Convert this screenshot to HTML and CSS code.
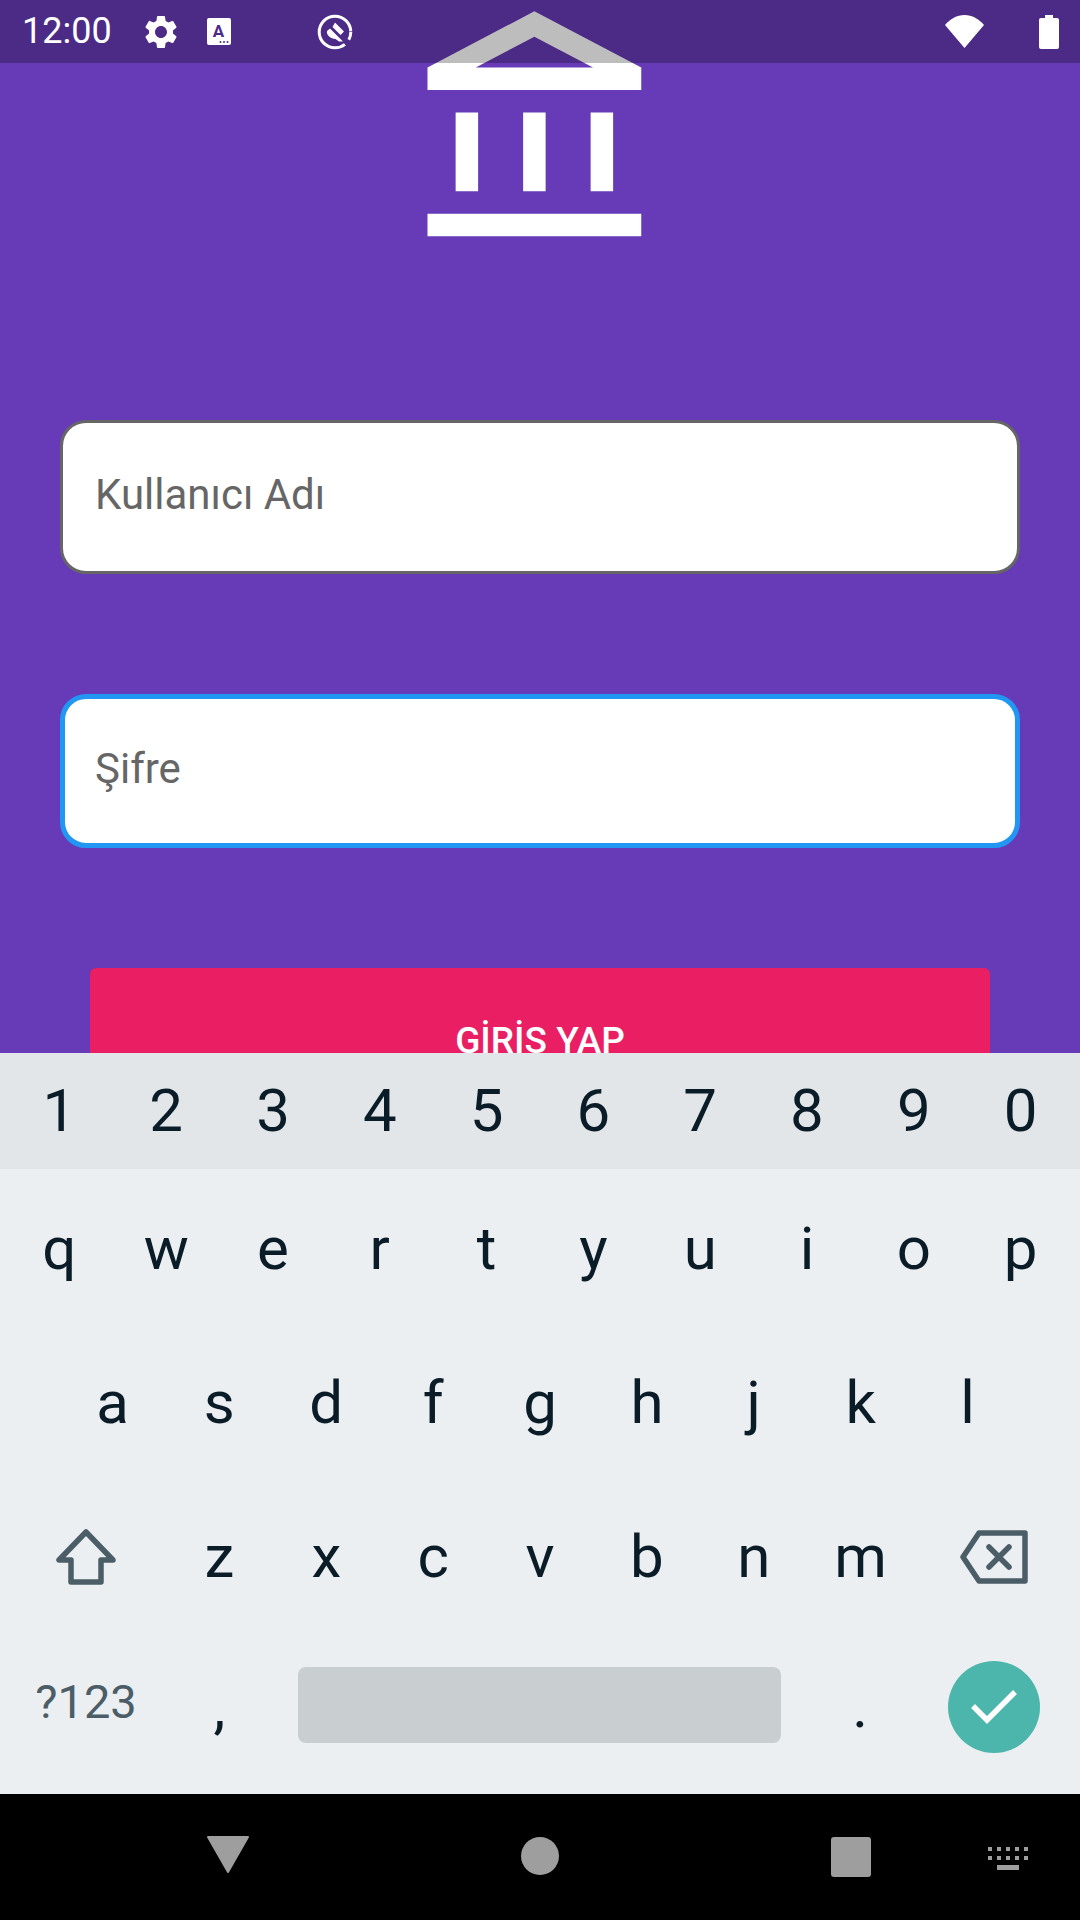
FILE: index.html
```html
<!DOCTYPE html>
<html lang="tr">
<head>
<meta charset="utf-8">
<title>Giriş</title>
<link rel="stylesheet" href="styles.css">
</head>
<body>
<div class="phone">
  <header class="status">
    <span class="time">12:00</span>
    <svg class="ic-gear" viewBox="0 0 24 24"><path fill="#fff" d="M19.14 12.94c.04-.3.06-.61.06-.94 0-.32-.02-.64-.07-.94l2.03-1.58a.49.49 0 0 0 .12-.61l-1.92-3.32a.488.488 0 0 0-.59-.22l-2.39.96c-.5-.38-1.03-.7-1.62-.94l-.36-2.54a.484.484 0 0 0-.48-.41h-3.84c-.24 0-.43.17-.47.41l-.36 2.54c-.59.24-1.13.57-1.62.94l-2.39-.96c-.22-.08-.47 0-.59.22L2.74 8.87c-.12.21-.08.47.12.61l2.03 1.58c-.05.3-.09.63-.09.94s.02.64.07.94l-2.03 1.58a.49.49 0 0 0-.12.61l1.92 3.32c.12.22.37.29.59.22l2.39-.96c.5.38 1.03.7 1.62.94l.36 2.54c.05.24.24.41.48.41h3.84c.24 0 .44-.17.47-.41l.36-2.54c.59-.24 1.13-.56 1.62-.94l2.39.96c.22.08.47 0 .59-.22l1.92-3.32c.12-.22.07-.47-.12-.61l-2.01-1.58zM12 15.6c-1.98 0-3.6-1.62-3.6-3.6s1.62-3.6 3.6-3.6 3.6 1.62 3.6 3.6-1.62 3.6-3.6 3.6z"/></svg>
    <svg class="ic-a" viewBox="0 0 24 27"><rect width="24" height="27" rx="2" fill="#fff"/><text x="11.5" y="19" text-anchor="middle" class="ic-a-letter">A</text><circle cx="13.5" cy="24" r="1" fill="#4c2b87"/><circle cx="17" cy="24" r="1" fill="#4c2b87"/><circle cx="20.5" cy="24" r="1" fill="#4c2b87"/></svg>
    <svg class="ic-q" viewBox="0 0 36 36"><circle cx="18" cy="18" r="15.8" fill="none" stroke="#fff" stroke-width="3" stroke-dasharray="84 6" stroke-dashoffset="-14"/><path fill="#fff" d="M18 8.5 27 17.5 23.5 21 15.5 13ZM13 14.5 20.5 22 26 27.5 22 27.5 18.5 25C14 25 9 21 10 17Z"/></svg>
    <span class="status-spacer"></span>
    <svg class="ic-wifi" viewBox="0 0 39 33"><path fill="#fff" d="M19.5 33 0 10C5 4 12 0 19.5 0S34 4 39 10Z"/></svg>
    <svg class="ic-batt" viewBox="0 0 20 34"><path fill="#fff" d="M6 0h8v3h4a2 2 0 0 1 2 2v27a2 2 0 0 1-2 2H2a2 2 0 0 1-2-2V5a2 2 0 0 1 2-2h4Z"/></svg>
  </header>
  <main class="app">
    <svg class="logo" viewBox="0 0 24 24"><path fill="#fff" d="M6.5 10h-2v7h2v-7zm6 0h-2v7h2v-7zm8.5 9H2v2h19v-2zm-2.5-9h-2v7h2v-7zm-7-6.74L16.71 6H6.29l5.21-2.74m0-2.26L2 6v2h19V6l-9.5-5z"/></svg>
    <div class="field field-idle">Kullanıcı Adı</div>
    <div class="field field-focus">Şifre</div>
    <button class="login">GİRİŞ YAP</button>
  </main>
  <section class="keyboard">
    <div class="row row-num">
      <span class="key">1</span><span class="key">2</span><span class="key">3</span><span class="key">4</span><span class="key">5</span><span class="key">6</span><span class="key">7</span><span class="key">8</span><span class="key">9</span><span class="key">0</span>
    </div>
    <div class="letters">
      <div class="row">
        <span class="key">q</span><span class="key">w</span><span class="key">e</span><span class="key">r</span><span class="key">t</span><span class="key">y</span><span class="key">u</span><span class="key">i</span><span class="key">o</span><span class="key">p</span>
      </div>
      <div class="row">
        <span class="key">a</span><span class="key">s</span><span class="key">d</span><span class="key">f</span><span class="key">g</span><span class="key">h</span><span class="key">j</span><span class="key">k</span><span class="key">l</span>
      </div>
      <div class="row">
        <span class="key key-wide"><svg class="ic-shift" viewBox="0 0 60 56"><path fill="none" stroke="#4b5d67" stroke-width="5.5" stroke-linejoin="round" d="M30 3 3 31H15V53H45V31H57Z"/></svg></span>
        <span class="key">z</span><span class="key">x</span><span class="key">c</span><span class="key">v</span><span class="key">b</span><span class="key">n</span><span class="key">m</span>
        <span class="key key-wide"><svg class="ic-back" viewBox="0 0 68 54"><path fill="none" stroke="#4b5d67" stroke-width="5.5" stroke-linejoin="round" d="M19 3H65V51H19L3 27Z"/><path fill="none" stroke="#4b5d67" stroke-width="5.5" stroke-linecap="round" d="M29 17 49 37M49 17 29 37"/></svg></span>
      </div>
      <div class="row row-bottom">
        <span class="key key-wide key-sym">?123</span>
        <span class="key key-punct">,</span>
        <span class="key key-space"><span class="spacebar"></span></span>
        <span class="key key-punct">.</span>
        <span class="key key-wide"><span class="enter"><svg class="ic-check" viewBox="0 0 46 36"><path fill="none" stroke="#fff" stroke-width="5.5" d="M2 17 16 31 44 3"/></svg></span></span>
      </div>
    </div>
  </section>
  <nav class="navbar">
    <svg class="nav-back" viewBox="0 0 42 37"><path fill="#9e9e9e" stroke="#9e9e9e" stroke-width="2" stroke-linejoin="round" d="M1 1H41L21 36Z"/></svg>
    <span class="nav-home"></span>
    <span class="nav-recent"></span>
    <svg class="nav-kbd" viewBox="0 0 40 23"><path fill="#9e9e9e" d="M0 0h4v4H0zM9 0h4v4H9zM18 0h4v4h-4zM27 0h4v4h-4zM36 0h4v4h-4zM0 9h4v4H0zM9 9h4v4H9zM18 9h4v4h-4zM27 9h4v4h-4zM36 9h4v4h-4zM9 18h22v5H9z"/></svg>
  </nav>
</div>
</body>
</html>
```

FILE: styles.css
```css
* { box-sizing: border-box; }
html, body { margin: 0; padding: 0; }
body { font-family: Roboto, "Noto Sans", sans-serif; }

.phone {
  position: relative;
  width: 1080px;
  height: 1920px;
  display: flex;
  flex-direction: column;
  overflow: hidden;
  background: #000;
}

.status {
  position: absolute;
  top: 0;
  left: 0;
  width: 100%;
  height: 63px;
  display: flex;
  align-items: center;
  padding: 0 21px 0 22px;
  background: rgba(0, 0, 0, 0.26);
  color: #fff;
}
.time { font-size: 36px; line-height: 63px; }
.ic-gear { width: 40px; height: 40px; margin-left: 29px; }
.ic-a { width: 24px; height: 27px; margin-left: 26px; margin-top: -1px; }
.ic-a-letter { font: 700 17px Roboto, sans-serif; fill: #4c2b87; }
.ic-q { width: 36px; height: 36px; margin-left: 86px; }
.status-spacer { flex: 1; }
.ic-wifi { width: 39px; height: 33px; }
.ic-batt { width: 20px; height: 34px; margin-left: 55px; }

.app {
  height: 1053px;
  flex: none;
  overflow: hidden;
  background: #673ab7;
  display: flex;
  flex-direction: column;
  align-items: center;
}
.logo { width: 270px; height: 270px; flex: none; }
.field {
  flex: none;
  width: 960px;
  height: 154px;
  display: flex;
  align-items: center;
  padding-left: 32px;
  padding-bottom: 6px;
  font-size: 42px;
  color: #666;
  background: #fff;
  border-radius: 26px;
}
.field-idle { margin-top: 150px; border: 3px solid #666; }
.field-focus { margin-top: 120px; border: 5px solid #2196f3; padding-left: 30px; }
.login {
  flex: none;
  width: 900px;
  height: 144px;
  margin-top: 120px;
  padding: 0;
  border: 0;
  border-radius: 6px;
  background: #e91e63;
  color: #fff;
  font: 500 37px Roboto, sans-serif;
}

.keyboard {
  height: 741px;
  flex: none;
  background: #eceff1;
  color: #0a1c27;
}
.row {
  display: flex;
  padding: 0 6px;
  height: 154px;
}
.row-num {
  height: 116px;
  background: #e2e6e9;
}
.letters { padding-top: 3px; }
.key {
  flex: 1 1 0;
  display: flex;
  align-items: center;
  justify-content: center;
  font-size: 60px;
  line-height: 1;
}
.row:nth-child(2) { padding-left: 59px; padding-right: 59px; }
.key-wide { flex: 0 0 160px; }
.key-space { flex: 0 0 534px; }
.key-punct { flex: 0 0 106.8px; }
.key-sym { font-size: 47px; color: #4b5d67; padding-bottom: 12px; }
.row-bottom { height: 146px; align-items: center; }
.row-bottom .key { height: 100%; }
.spacebar { width: 483px; height: 76px; border-radius: 8px; background: #c9ced1; margin-bottom: 4px; }
.enter {
  width: 92px;
  height: 92px;
  border-radius: 50%;
  background: #4db6ac;
  display: flex;
  align-items: center;
  justify-content: center;
}
.ic-shift { width: 60px; height: 56px; }
.ic-back { width: 68px; height: 54px; }
.ic-check { width: 46px; height: 36px; }

.navbar {
  flex: 1;
  position: relative;
  background: #000;
  display: grid;
  grid-template-columns: 228px 1fr 1fr 1fr;
}
.nav-back { position: absolute; left: 207px; top: 42px; width: 42px; height: 37px; }
.nav-home { position: absolute; left: 521px; top: 43px; width: 38px; height: 38px; border-radius: 50%; background: #9e9e9e; }
.nav-recent { position: absolute; left: 831px; top: 43px; width: 40px; height: 40px; border-radius: 3px; background: #9e9e9e; }
.nav-kbd { position: absolute; left: 988px; top: 53px; width: 40px; height: 23px; }
```
